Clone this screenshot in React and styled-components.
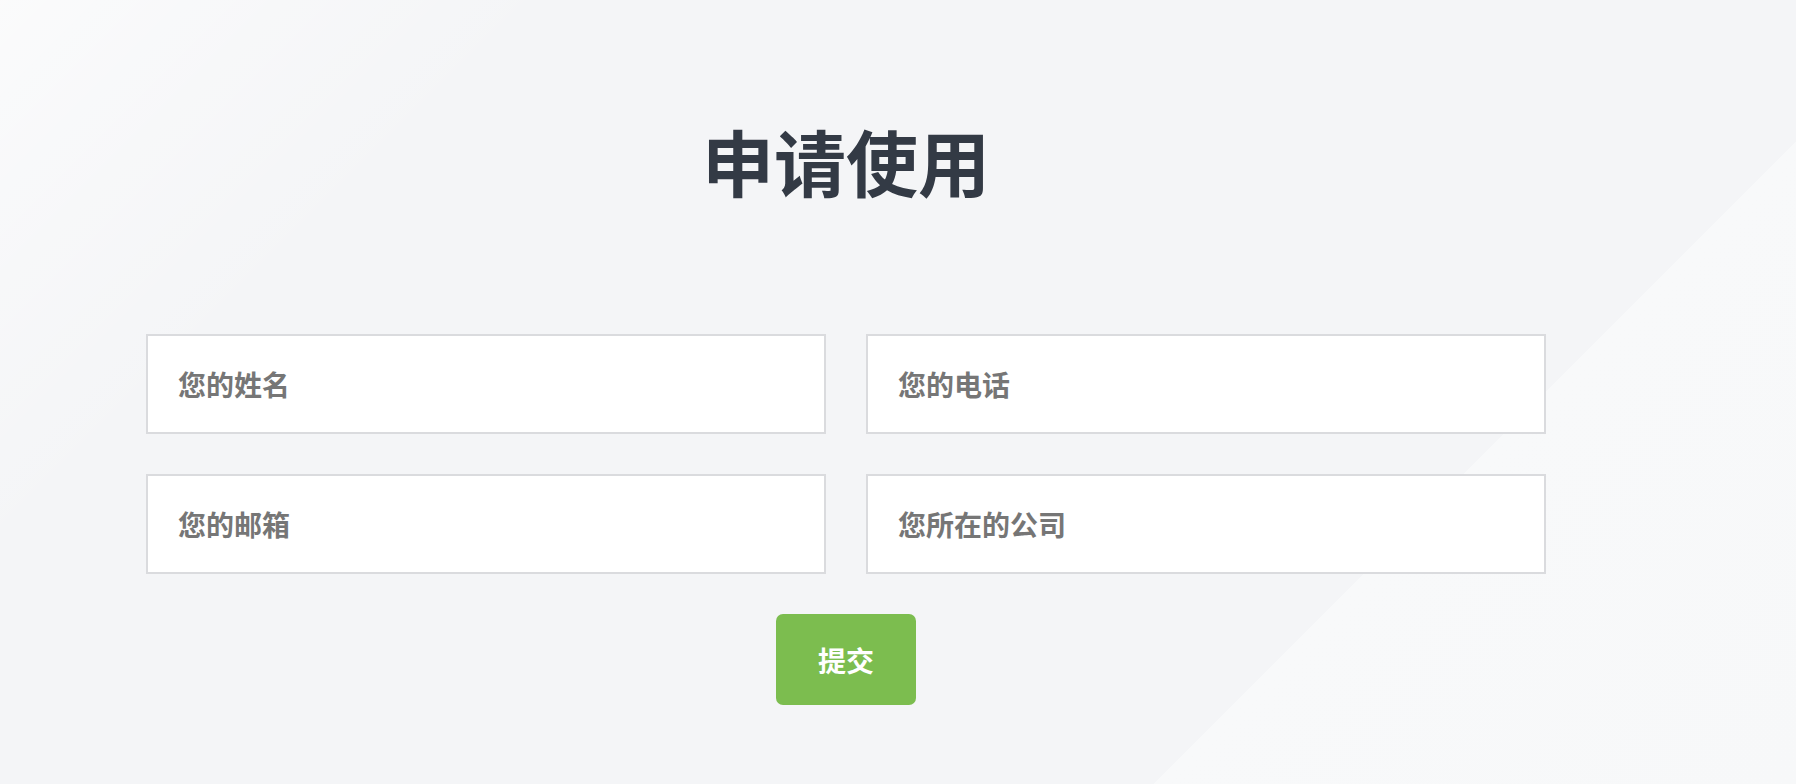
import styled, { createGlobalStyle } from 'styled-components';

const GlobalStyle = createGlobalStyle`
	html, body {
		margin: 0;
		padding: 0;
		height: 100%;
		overflow: hidden;
	}
	body {
		font-family: "Noto Sans CJK SC", "Noto Sans", sans-serif;
	}
	* {
		box-sizing: border-box;
	}
`;

const Page = styled.main`
	width: 100%;
	height: 784px;
	background:
		linear-gradient(135deg, rgba(255, 255, 255, 0.6) 0%, rgba(255, 255, 255, 0) 22%),
		linear-gradient(135deg, #f4f5f7 0%, #f4f5f7 75.1%, #f8f9fa 75.1%, #f7f8f9 100%);
	padding-top: 122px;
`;

const Container = styled.section`
	width: 1400px;
	margin-left: 146px;
	display: flex;
	flex-direction: column;
	align-items: center;
`;

const Title = styled.h2`
	margin: 0;
	font-size: 72px;
	line-height: 76px;
	font-weight: 700;
	color: #333a45;
	letter-spacing: 0;
`;

const Form = styled.form`
	width: 100%;
	margin-top: 136px;
	display: flex;
	flex-direction: column;
	align-items: center;
	gap: 40px;
`;

const FieldGrid = styled.div`
	width: 100%;
	display: grid;
	grid-template-columns: 1fr 1fr;
	gap: 40px;
`;

const Input = styled.input`
	height: 100px;
	width: 100%;
	padding: 0 30px;
	border: 2px solid #dadbde;
	background: #ffffff;
	outline: none;
	font-family: "Noto Sans CJK SC", "Noto Sans", sans-serif;
	font-size: 28px;
	font-weight: 700;
	color: #333;
	&::placeholder {
		color: #767676;
	}
`;

const SubmitButton = styled.button`
	width: 140px;
	height: 91px;
	border: none;
	border-radius: 7px;
	background: #7cbd4f;
	color: #ffffff;
	font-family: "Noto Sans CJK SC", "Noto Sans", sans-serif;
	font-size: 28px;
	font-weight: 700;
	cursor: pointer;
`;

const fields = ['您的姓名', '您的电话', '您的邮箱', '您所在的公司'];

export default function App() {
	return (
		<>
			<GlobalStyle />
			<Page>
				<Container>
					<Title>申请使用</Title>
					<Form onSubmit={(e) => e.preventDefault()}>
						<FieldGrid>
							{fields.map((f) => (
								<Input key={f} placeholder={f} />
							))}
						</FieldGrid>
						<SubmitButton type="submit">提交</SubmitButton>
					</Form>
				</Container>
			</Page>
		</>
	);
}
